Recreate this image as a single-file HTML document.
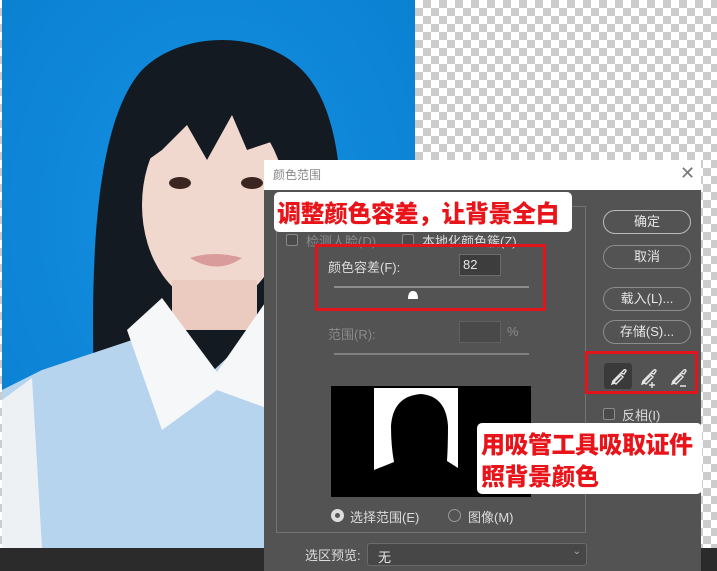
<!DOCTYPE html>
<html><head><meta charset="utf-8"><style>
*{margin:0;padding:0;box-sizing:border-box}
body{width:717px;height:571px;overflow:hidden;position:relative;background:#2b2b2b;font-family:"Liberation Sans","Noto Sans CJK SC",sans-serif}
.a{position:absolute}
.chk{background:#fff;background-image:conic-gradient(#cccccc 25%,#fff 0 50%,#cccccc 0 75%,#fff 0);background-size:16px 16px}
.t{color:#dcdcdc;font-size:13px;white-space:nowrap}
.g{color:#8a8a8a}
.btn{position:absolute;left:603px;width:88px;height:24px;border:1px solid #8c8c8c;border-radius:12px;color:#e6e6e6;font-size:13px;text-align:center;line-height:22px}
.cb{position:absolute;width:12px;height:12px;border:1px solid #8a8a8a;border-radius:2px;background:#4a4a4a}
.ann{position:absolute;background:#fff;border-radius:5px;color:#e8141a;font-weight:900;font-size:24px;font-family:"Noto Sans CJK SC",sans-serif;white-space:nowrap;letter-spacing:-0.5px}
.red{position:absolute;border:3px solid #e0141a}
</style></head><body>
<div class="a chk" style="left:415px;top:0;width:302px;height:548px"></div>
<div class="a chk" style="left:0;top:0;width:2px;height:548px"></div>
<svg class="a" style="left:2px;top:0" width="413" height="548">
<defs><radialGradient id="bg" cx="50%" cy="40%" r="70%"><stop offset="0" stop-color="#1591e4"/><stop offset="1" stop-color="#0a7fd0"/></radialGradient></defs>
<rect width="413" height="548" fill="url(#bg)"/>
<path d="M92 385 C88 250 95 120 140 70 C180 30 260 30 300 70 C340 110 345 200 335 300 L330 390 Z" fill="#141a22"/>
<ellipse cx="212" cy="205" rx="72" ry="100" fill="#f1d8cf"/>
<path d="M132 170 C138 90 190 78 215 88 C250 78 292 100 292 170 L275 140 L245 150 L230 115 L205 160 L185 125 L160 150 Z" fill="#141a22"/>
<rect x="170" y="280" width="85" height="50" fill="#ebcbc0"/>
<ellipse cx="178" cy="183" rx="11" ry="6" fill="#3a2520"/><ellipse cx="250" cy="183" rx="11" ry="6" fill="#3a2520"/>
<path d="M188 258 Q212 250 240 258 Q215 275 188 258 Z" fill="#d99c9a"/>
<path d="M0 390 L40 370 L130 340 L165 310 L212 370 L265 320 L300 345 L340 360 L413 400 L413 548 L0 548 Z" fill="#b7d4ee"/>
<path d="M125 330 L160 298 L215 372 L265 300 L300 340 L270 410 L215 390 L160 430 Z" fill="#f6f7f9"/>
<path d="M0 400 L30 378 L40 548 L0 548 Z" fill="#eef1f4"/>
</svg>
<div class="a" style="left:264px;top:160px;width:437px;height:411px;background:#535353"></div>
<div class="a" style="left:264px;top:160px;width:437px;height:30px;background:#fff"></div>
<div class="a" style="left:273px;top:166px;font-size:12px;color:#888">颜色范围</div>
<div class="a" style="left:680px;top:163px;font-size:18px;color:#777;font-weight:300">✕</div>
<div class="a" style="left:276px;top:206px;width:310px;height:327px;border:1px solid #747474"></div>
<div class="cb" style="left:286px;top:234px"></div><div class="a t g" style="left:306px;top:231px">检测人脸(D)</div>
<div class="cb" style="left:402px;top:234px"></div><div class="a t" style="left:422px;top:231px">本地化颜色簇(Z)</div>
<div class="ann" style="left:274px;top:192px;width:298px;height:40px;line-height:40px;padding-left:3px">调整颜色容差，让背景全白</div>
<div class="red" style="left:315px;top:244px;width:231px;height:67px"></div>
<div class="a t" style="left:328px;top:257px">颜色容差(F):</div>
<div class="a" style="left:459px;top:254px;width:42px;height:22px;background:#3d3d3d;border:1px solid #6c6c6c;color:#e6e6e6;font-size:13px;padding:2px 3px">82</div>
<div class="a" style="left:334px;top:286px;width:195px;height:2px;background:#8c8c8c"></div>
<svg class="a" style="left:407px;top:290px" width="12" height="10"><path d="M1 9 Q1 1 6 1 Q11 1 11 9 Z" fill="#fff"/></svg>
<div class="a t g" style="left:328px;top:324px">范围(R):</div>
<div class="a" style="left:459px;top:321px;width:42px;height:22px;background:#494949;border:1px solid #606060"></div>
<div class="a t g" style="left:507px;top:324px">%</div>
<div class="a" style="left:334px;top:353px;width:195px;height:2px;background:#808080"></div>
<svg class="a" style="left:331px;top:386px" width="200" height="111"><rect width="200" height="111" fill="#000"/><rect x="43" y="2" width="84" height="82" fill="#fff"/><path d="M43 84 L63 76 Q60 60 60 40 Q62 10 90 8 Q115 10 117 40 Q117 60 116 75 L127 82 L127 111 L43 111 Z" fill="#000"/></svg>
<div class="a" style="left:331px;top:509px;width:13px;height:13px;border-radius:50%;background:#ddd;border:3px solid #ddd"><div style="width:5px;height:5px;border-radius:50%;background:#555;margin:1px"></div></div>
<div class="a t" style="left:350px;top:507px">选择范围(E)</div>
<div class="a" style="left:448px;top:509px;width:13px;height:13px;border-radius:50%;border:1px solid #999"></div>
<div class="a t" style="left:468px;top:507px">图像(M)</div>
<div class="a t" style="left:305px;top:545px">选区预览:</div>
<div class="a" style="left:367px;top:543px;width:220px;height:23px;background:#474747;border:1px solid #6a6a6a;border-radius:3px;color:#e6e6e6;font-size:13px;padding:3px 10px">无<span style="position:absolute;right:5px;top:2px;font-size:10px;color:#aaa">⌄</span></div>
<div class="btn" style="top:210px;border-color:#bbb">确定</div>
<div class="btn" style="top:245px">取消</div>
<div class="btn" style="top:287px">载入(L)...</div>
<div class="btn" style="top:320px">存储(S)...</div>
<div class="red" style="left:585px;top:351px;width:113px;height:43px"></div>
<div class="a" style="left:604px;top:363px;width:28px;height:26px;background:#3a3a3a;border-radius:3px"></div>
<svg class="a" style="left:604px;top:363px" width="90" height="26" fill="none" stroke="#e6e6e6" stroke-width="1.4">
<path d="M9 20 L17 12 M11 20 L8 21 L9 18 L16 11 L19 14 L12 21 Z M17 10 L20 7 Q22 6 22 8 L20 11 Z"/>
<path d="M39 20 L47 12 M41 20 L38 21 L39 18 L46 11 L49 14 L42 21 Z M47 10 L50 7 Q52 6 52 8 L50 11 Z M48 19 L48 25 M45 22 L51 22"/>
<path d="M69 20 L77 12 M71 20 L68 21 L69 18 L76 11 L79 14 L72 21 Z M77 10 L80 7 Q82 6 82 8 L80 11 Z M76 23 L82 23"/>
</svg>
<div class="cb" style="left:603px;top:408px"></div><div class="a t" style="left:622px;top:405px">反相(I)</div>
<div class="ann" style="left:477px;top:423px;width:225px;height:71px;line-height:32px;padding:4px 0 0 4px">用吸管工具吸取证件<br>照背景颜色</div>
</body></html>
